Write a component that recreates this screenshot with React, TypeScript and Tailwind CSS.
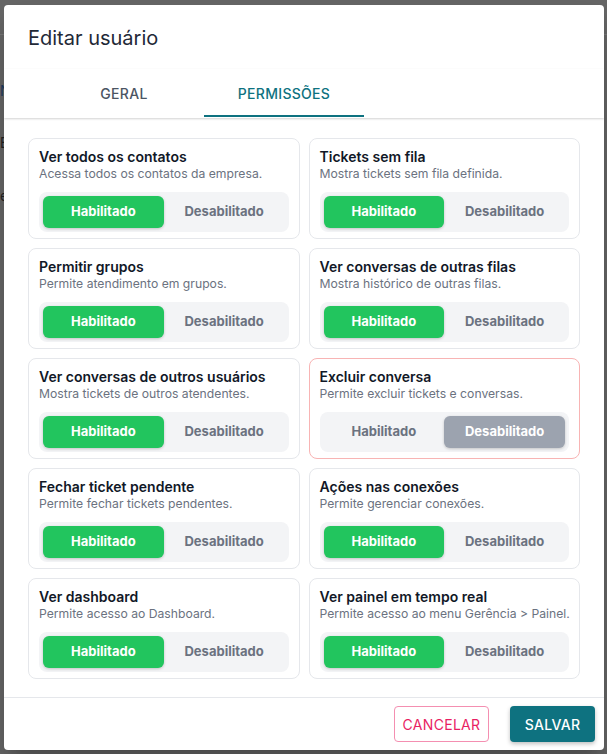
import React from 'react'

type Perm = {
  title: string
  description: string
  enabled: boolean
  danger?: boolean
}

const perms: Perm[] = [
  { title: 'Ver todos os contatos', description: 'Acessa todos os contatos da empresa.', enabled: true },
  { title: 'Tickets sem fila', description: 'Mostra tickets sem fila definida.', enabled: true },
  { title: 'Permitir grupos', description: 'Permite atendimento em grupos.', enabled: true },
  { title: 'Ver conversas de outras filas', description: 'Mostra histórico de outras filas.', enabled: true },
  { title: 'Ver conversas de outros usuários', description: 'Mostra tickets de outros atendentes.', enabled: true },
  { title: 'Excluir conversa', description: 'Permite excluir tickets e conversas.', enabled: false, danger: true },
  { title: 'Fechar ticket pendente', description: 'Permite fechar tickets pendentes.', enabled: true },
  { title: 'Ações nas conexões', description: 'Permite gerenciar conexões.', enabled: true },
  { title: 'Ver dashboard', description: 'Permite acesso ao Dashboard.', enabled: true },
  { title: 'Ver painel em tempo real', description: 'Permite acesso ao menu Gerência > Painel.', enabled: true },
]

function Toggle({ enabled }: { enabled: boolean }) {
  return (
    <div className="mt-[10px] grid h-[40px] grid-cols-2 rounded-lg bg-[#f3f4f6] p-1">
      <button
        className={`rounded-md text-[13px] font-bold ${enabled ? 'bg-[#22c55e] text-white shadow-[0_1px_3px_rgba(0,0,0,0.2)]' : 'text-[#6b7280]'}`}
      >
        Habilitado
      </button>
      <button
        className={`rounded-md text-[13px] font-bold ${!enabled ? 'bg-[#9ca3af] text-white shadow-[0_1px_3px_rgba(0,0,0,0.2)]' : 'text-[#6b7280]'}`}
      >
        Desabilitado
      </button>
    </div>
  )
}

export default function App() {
  return (
    <div className="relative h-[754px] w-full overflow-hidden bg-[#666666] font-['Inter',sans-serif]">
      {/* page behind the backdrop */}
      <div className="absolute left-0 top-[34px] h-px w-full bg-[#777]" />
      <span className="absolute left-0 top-[80px] text-[14px] text-[#1e3a5f]">Nome</span>
      <span className="absolute left-0 top-[132px] text-[14px] text-[#222]">E-mail</span>
      <span className="absolute left-0 top-[185px] text-[14px] text-[#222]">email</span>

      {/* dialog */}
      <div className="absolute left-[4px] top-[5px] flex h-[745px] w-[600px] flex-col overflow-hidden rounded bg-white shadow-[0_11px_15px_-7px_rgba(0,0,0,0.2),0_24px_38px_3px_rgba(0,0,0,0.14)]">
        <div className="flex h-[64px] shrink-0 items-center px-6 pt-[2px]">
          <h2 className="text-[20px] font-normal text-[#1f2937]">Editar usuário</h2>
        </div>

        {/* tabs */}
        <div className="flex h-[49px] shrink-0 pl-10 shadow-[0_1px_2px_rgba(0,0,0,0.18)]">
          <div className="flex w-[160px] items-center justify-center text-[14px] font-medium tracking-[0.3px] text-[#4b5563]">
            GERAL
          </div>
          <div className="relative flex w-[160px] items-center justify-center text-[14px] font-medium tracking-[0.3px] text-[#0e7280]">
            PERMISSÕES
            <span className="absolute bottom-[1px] left-0 h-[2px] w-full bg-[#0e7280]" />
          </div>
        </div>

        {/* permissions grid */}
        <div className="flex-1 px-6 pt-[20px]">
          <div className="grid grid-cols-2 gap-[9px]">
            {perms.map((p, i) => (
              <div
                key={i}
                className={`rounded-lg border px-[10px] pb-[6px] pt-[9px] ${p.danger ? 'border-[#f8b4b4]' : 'border-[#e5e7eb]'}`}
              >
                <h3 className="text-[14px] font-semibold leading-[18px] text-[#111827]">{p.title}</h3>
                <p className="whitespace-nowrap text-[12.2px] leading-[16px] text-[#6b7280]">{p.description}</p>
                <Toggle enabled={p.enabled} />
              </div>
            ))}
          </div>
        </div>

        {/* footer */}
        <div className="flex h-[53px] shrink-0 items-center justify-end gap-[21px] border-t border-[#e5e7eb] pr-[9px]">
          <button className="h-[36px] w-[95px] rounded border border-[#f48fb1] text-[14px] font-normal tracking-[0.3px] text-[#e91e63]">
            CANCELAR
          </button>
          <button className="h-[36px] w-[85px] rounded bg-[#0e7280] text-[14px] font-medium tracking-[0.3px] text-white shadow-[0_2px_4px_rgba(0,0,0,0.25)]">
            SALVAR
          </button>
        </div>
      </div>
    </div>
  )
}
